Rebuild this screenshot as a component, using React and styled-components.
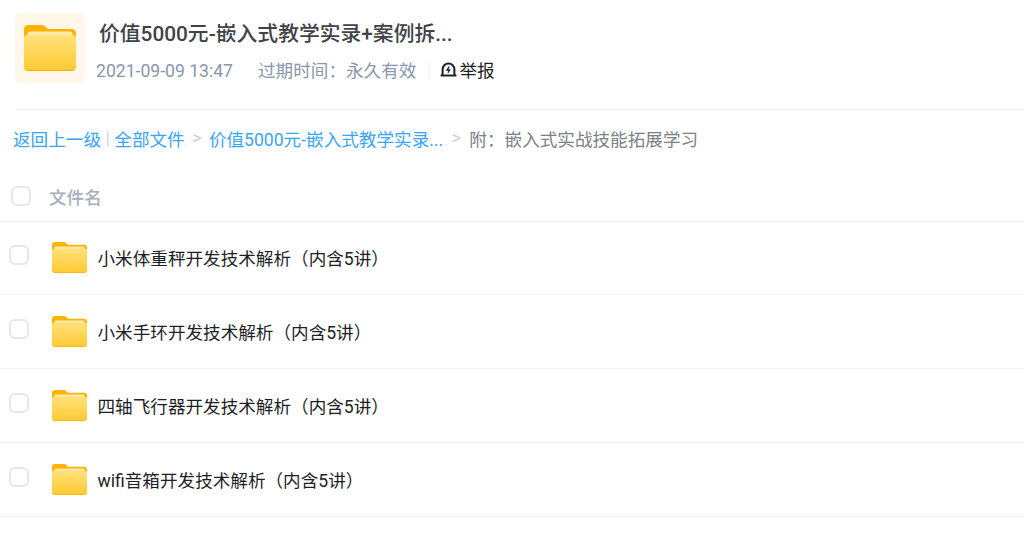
import React from 'react';
import styled, { createGlobalStyle } from 'styled-components';

const GlobalStyle = createGlobalStyle`
  html, body {
    margin: 0;
    padding: 0;
    background: #fff;
  }
  body {
    font-family: "Roboto", "Noto Sans CJK SC", sans-serif;
  }
`;

const Page = styled.div`
  width: 1024px;
  height: 550px;
  overflow: hidden;
`;

const Header = styled.div`
  display: flex;
  margin-left: 15px;
  padding-top: 13px;
  height: 96px;
  border-bottom: 1px solid #f2f3f5;
`;

const IconBox = styled.div`
  width: 70px;
  height: 70px;
  border-radius: 8px;
  background: #fff8ea;
  display: flex;
  align-items: center;
  justify-content: center;
`;

const Info = styled.div`
  margin-left: 11px;
`;

const Title = styled.div`
  margin: 7px 0 0 3px;
  font-size: 20.8px;
  line-height: 28px;
  font-weight: 500;
  color: #404248;
`;

const Meta = styled.div`
  display: flex;
  align-items: center;
  margin-top: 10px;
  font-size: 17.6px;
  line-height: 26px;
  color: #8a96ab;
`;

const Expire = styled.span`
  margin-left: 25px;
`;

const Report = styled.span`
  display: flex;
  align-items: center;
  margin-left: 13px;
  padding-left: 10px;
  color: #1c1f26;
  border-left: 1px solid #eceef1;
  line-height: 18px;
  gap: 2px;
  svg {
    margin-bottom: 3px;
  }
`;

const Crumbs = styled.div`
  display: flex;
  align-items: center;
  height: 56px;
  margin-bottom: 2px;
  padding-left: 13px;
  font-size: 17.6px;
  color: #7c8089;
`;

const CrumbLink = styled.span`
  color: #3aa5f5;
`;

const Sep = styled.span`
  color: ${p => (p.$thin ? '#ccd7e3' : '#c3cfdc')};
  margin: ${p => p.$gap};
`;

const ColumnHead = styled.div`
  display: flex;
  align-items: center;
  height: 48.5px;
  padding: 4px 0 0 11px;
  border-bottom: 1px solid #f2f3f5;
  font-size: 17.6px;
  font-weight: 500;
  color: #a6aebc;
`;

const Check = styled.span`
  display: block;
  flex: none;
  width: 20px;
  height: 20px;
  box-sizing: border-box;
  border: 2px solid #e6e7ea;
  border-radius: 6px;
  background: #fff;
`;

const HeadLabel = styled.span`
  margin-left: 18px;
`;

const Row = styled.div`
  display: flex;
  align-items: center;
  height: 72.9px;
  padding-left: 9px;
  border-bottom: 1px solid #f2f3f5;
  font-size: 17.6px;
  color: #1c1f26;
`;

const RowCheck = styled(Check)`
  margin-bottom: 5px;
`;

const RowIcon = styled.span`
  display: flex;
  margin: 0 10.500px 0 23px;
`;

function Folder({ width, height, id }) {
  return (
    <svg width={width} height={height} viewBox="0 0 52 46">
      <path d="M4 0h13c2 0 3 .6 4.4 1.8L24 4h24c2.2 0 4 1.8 4 4v34c0 2.2-1.800 4-4 4H4c-2.200 0-4-1.800-4-4V4c0-2.200 1.800-4 4-4z" fill="#ffb300" />
      <path d="M6 6.500h40c1.500 0 2.500 1 2.500 2.500v3h-45V9c0-1.500 1-2.500 2.500-2.500z" fill="#ffe9a8" />
      <path d="M3 10h46c1.700 0 3 1.300 3 3v28c0 2.200-1.800 4-4 4H4c-2.200 0-4-1.800-4-4V13c0-1.700 1.300-3 3-3z" fill={`url(#${id})`} />
      <defs>
        <linearGradient id={id} x1="0" y1="0" x2="0" y2="1">
          <stop offset="0" stopColor="#ffe17a" />
          <stop offset="1" stopColor="#ffca35" />
        </linearGradient>
      </defs>
    </svg>
  );
}

function ReportIcon() {
  return (
    <svg width="17" height="15" viewBox="0 0 17 15">
      <path d="M2.600 13V7.500a5.900 5.900 0 0 1 11.800 0V13" fill="none" stroke="#1c1f26" strokeWidth="2" />
      <path d="M.6 13.500h15.800" stroke="#1c1f26" strokeWidth="2" />
      <path d="M9.300 4.500 7 8h2.600L8 10.800" fill="none" stroke="#1c1f26" strokeWidth="1.300" />
    </svg>
  );
}

const files = [
  '小米体重秤开发技术解析（内含5讲）',
  '小米手环开发技术解析（内含5讲）',
  '四轴飞行器开发技术解析（内含5讲）',
  'wifi音箱开发技术解析（内含5讲）',
];

export default function App() {
  return (
    <Page>
      <GlobalStyle />
      <Header>
        <IconBox>
          <Folder width={52} height={46} id="big-folder" />
        </IconBox>
        <Info>
          <Title>价值5000元-嵌入式教学实录+案例拆...</Title>
          <Meta>
            <span>2021-09-09 13:47</span>
            <Expire>过期时间：永久有效</Expire>
            <Report>
              <ReportIcon />
              举报
            </Report>
          </Meta>
        </Info>
      </Header>
      <Crumbs>
        <CrumbLink>返回上一级</CrumbLink>
        <Sep $thin $gap="0 4.500px">|</Sep>
        <CrumbLink>全部文件</CrumbLink>
        <Sep $gap="0 7.500px">&gt;</Sep>
        <CrumbLink>价值5000元-嵌入式教学实录...</CrumbLink>
        <Sep $gap="0 8.500px">&gt;</Sep>
        <span>附：嵌入式实战技能拓展学习</span>
      </Crumbs>
      <ColumnHead>
        <Check />
        <HeadLabel>文件名</HeadLabel>
      </ColumnHead>
      {files.map((name, i) => (
        <Row key={name}>
          <RowCheck />
          <RowIcon>
            <Folder width={35} height={31} id={`folder-${i}`} />
          </RowIcon>
          <span>{name}</span>
        </Row>
      ))}
    </Page>
  );
}
